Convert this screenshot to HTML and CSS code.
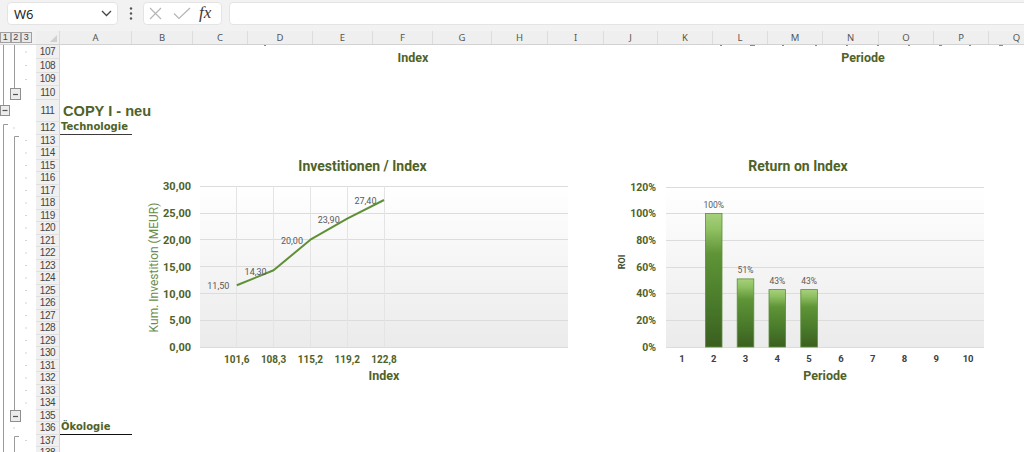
FILE: index.html
```html
<!DOCTYPE html>
<html lang="de">
<head>
<meta charset="utf-8">
<title>Sheet</title>
<link rel="stylesheet" href="styles.css">
</head>
<body>
<div class="app">
  <div class="fbar">
    <div class="namebox">
      <span class="ref">W6</span>
      <svg class="chev" width="11" height="7" viewBox="0 0 11 7"><path d="M1 1 L5.5 5.5 L10 1" fill="none" stroke="#444" stroke-width="1.3"/></svg>
    </div>
    <div class="kebab">
      <svg width="4" height="13" viewBox="0 0 4 13"><circle cx="2" cy="1.5" r="1.2" fill="#555"/><circle cx="2" cy="6.5" r="1.2" fill="#555"/><circle cx="2" cy="11.5" r="1.2" fill="#555"/></svg>
    </div>
    <div class="fxbox">
      <svg class="ico-x" width="13" height="13" viewBox="0 0 13 13"><path d="M1 1 L12 12 M12 1 L1 12" stroke="#b5b5b5" stroke-width="1.2" fill="none"/></svg>
      <svg class="ico-ok" width="18" height="13" viewBox="0 0 18 13"><path d="M1 6.5 L6 11.5 L17 1" stroke="#b5b5b5" stroke-width="1.2" fill="none"/></svg>
      <span class="fx">fx</span>
    </div>
    <div class="formula"></div>
  </div>

  <div class="colhdr">
    <div class="levels"><span class="lvl">1</span><span class="lvl">2</span><span class="lvl">3</span></div>
    <div class="corner"><svg width="7" height="7" viewBox="0 0 7 7"><path d="M7 0 L7 7 L0 7 Z" fill="#d0d0d0"/></svg></div>
    <div class="ch w72">A</div>
    <div class="ch w61">B</div>
    <div class="ch w55">C</div>
    <div class="ch w65">D</div>
    <div class="ch w60">E</div>
    <div class="ch w60">F</div>
    <div class="ch w59">G</div>
    <div class="ch w56">H</div>
    <div class="ch w56">I</div>
    <div class="ch w54">J</div>
    <div class="ch w55">K</div>
    <div class="ch w55">L</div>
    <div class="ch w55">M</div>
    <div class="ch w56">N</div>
    <div class="ch w55">O</div>
    <div class="ch w55">P</div>
    <div class="ch w56">Q</div>
  </div>

  <div class="sheet">
    <svg class="outline" width="36" height="407" viewBox="0 0 36 407">
      <g stroke="#9a9a9a" stroke-width="1" fill="none">
        <path d="M3.5 0 V60"/>
        <path d="M14.5 0 V43"/>
        <path d="M8 79.5 H3.5 V407"/>
        <path d="M19 91.5 H14.5 V365"/>
        <path d="M19 391.5 H14.5 V407"/>
      </g>
      <g class="obtn">
        <rect x="10.5" y="43.5" width="10" height="11"/>
        <path d="M13 49.5 H18"/>
        <rect x="0.5" y="60.5" width="9" height="10"/>
        <path d="M2.5 65.5 H7.5"/>
        <rect x="10.5" y="365.5" width="10" height="11"/>
        <path d="M13 371.5 H18"/>
      </g>
      <g fill="#a8a8a8">
        <rect x="25.5" y="6.5" width="1" height="1"/>
        <rect x="25.5" y="20" width="1" height="1"/>
        <rect x="25.5" y="34" width="1" height="1"/>
        <rect x="13.5" y="82.5" width="1" height="1"/>
        <rect x="25.5" y="95" width="1" height="1"/>
        <rect x="25.5" y="107.5" width="1" height="1"/>
        <rect x="25.5" y="120" width="1" height="1"/>
        <rect x="25.5" y="132.5" width="1" height="1"/>
        <rect x="25.5" y="145" width="1" height="1"/>
        <rect x="25.5" y="157.5" width="1" height="1"/>
        <rect x="25.5" y="170" width="1" height="1"/>
        <rect x="25.5" y="182.5" width="1" height="1"/>
        <rect x="25.5" y="195" width="1" height="1"/>
        <rect x="25.5" y="207.5" width="1" height="1"/>
        <rect x="25.5" y="220" width="1" height="1"/>
        <rect x="25.5" y="232.5" width="1" height="1"/>
        <rect x="25.5" y="245" width="1" height="1"/>
        <rect x="25.5" y="257.5" width="1" height="1"/>
        <rect x="25.5" y="270" width="1" height="1"/>
        <rect x="25.5" y="282.5" width="1" height="1"/>
        <rect x="25.5" y="295" width="1" height="1"/>
        <rect x="25.5" y="307.5" width="1" height="1"/>
        <rect x="25.5" y="320" width="1" height="1"/>
        <rect x="25.5" y="332.5" width="1" height="1"/>
        <rect x="25.5" y="345" width="1" height="1"/>
        <rect x="25.5" y="357.5" width="1" height="1"/>
        <rect x="13.5" y="382.5" width="1" height="1"/>
        <rect x="25.5" y="395" width="1" height="1"/>
      </g>
    </svg>

    <div class="rows">
      <div class="row rA"><div class="rh">107</div><div class="ca"></div></div>
      <div class="row rA"><div class="rh">108</div><div class="ca"></div></div>
      <div class="row rA"><div class="rh">109</div><div class="ca"></div></div>
      <div class="row rA"><div class="rh">110</div><div class="ca"></div></div>
      <div class="row rB"><div class="rh">111</div><div class="ca head"><span>COPY I - neu</span></div></div>
      <div class="row"><div class="rh">112</div><div class="ca sec"><span>Technologie</span></div></div>
      <div class="row"><div class="rh">113</div><div class="ca"></div></div>
      <div class="row"><div class="rh">114</div><div class="ca"></div></div>
      <div class="row"><div class="rh">115</div><div class="ca"></div></div>
      <div class="row"><div class="rh">116</div><div class="ca"></div></div>
      <div class="row"><div class="rh">117</div><div class="ca"></div></div>
      <div class="row"><div class="rh">118</div><div class="ca"></div></div>
      <div class="row"><div class="rh">119</div><div class="ca"></div></div>
      <div class="row"><div class="rh">120</div><div class="ca"></div></div>
      <div class="row"><div class="rh">121</div><div class="ca"></div></div>
      <div class="row"><div class="rh">122</div><div class="ca"></div></div>
      <div class="row"><div class="rh">123</div><div class="ca"></div></div>
      <div class="row"><div class="rh">124</div><div class="ca"></div></div>
      <div class="row"><div class="rh">125</div><div class="ca"></div></div>
      <div class="row"><div class="rh">126</div><div class="ca"></div></div>
      <div class="row"><div class="rh">127</div><div class="ca"></div></div>
      <div class="row"><div class="rh">128</div><div class="ca"></div></div>
      <div class="row"><div class="rh">129</div><div class="ca"></div></div>
      <div class="row"><div class="rh">130</div><div class="ca"></div></div>
      <div class="row"><div class="rh">131</div><div class="ca"></div></div>
      <div class="row"><div class="rh">132</div><div class="ca"></div></div>
      <div class="row"><div class="rh">133</div><div class="ca"></div></div>
      <div class="row"><div class="rh">134</div><div class="ca"></div></div>
      <div class="row"><div class="rh">135</div><div class="ca"></div></div>
      <div class="row"><div class="rh">136</div><div class="ca sec sec-dark"><span>Ökologie</span></div></div>
      <div class="row"><div class="rh">137</div><div class="ca"></div></div>
      <div class="row"><div class="rh">138</div><div class="ca"></div></div>
    </div>
  </div>

  <!-- remnants of charts above (rows scrolled off) -->
  <svg class="remnant" width="1024" height="30" viewBox="0 40 1024 30">
    <g fill="#8a8a8a">
      <rect x="264" y="45" width="2" height="1"/>
      <rect x="720" y="45" width="2" height="1"/>
      <rect x="750" y="45" width="5" height="1"/>
      <rect x="782" y="45" width="2" height="1"/>
      <rect x="815" y="45" width="2" height="1"/>
      <rect x="846" y="45" width="2" height="1"/>
      <rect x="877" y="45" width="2" height="1"/>
      <rect x="908" y="45" width="2" height="1"/>
      <rect x="939" y="45" width="3" height="1"/>
      <rect x="969" y="45" width="2" height="1"/>
      <rect x="999" y="45" width="4" height="1"/>
    </g>
    <text class="c-axt" x="413" y="61.5" text-anchor="middle">Index</text>
    <text class="c-axt" x="863" y="61.5" text-anchor="middle">Periode</text>
  </svg>

  <!-- Chart 1 -->
  <svg class="chart chart1" width="450" height="250" viewBox="130 145 450 250">
    <defs>
      <linearGradient id="pg1" x1="0" y1="0" x2="0" y2="1">
        <stop offset="0" stop-color="#ffffff"/>
        <stop offset="0.35" stop-color="#f8f8f8"/>
        <stop offset="1" stop-color="#ebebeb"/>
      </linearGradient>
    </defs>
    <rect x="200" y="186" width="368" height="161" fill="url(#pg1)"/>
    <g stroke="#dcdcdc" stroke-width="1">
      <line x1="200" x2="568" y1="186.5" y2="186.5"/>
      <line x1="200" x2="568" y1="213.5" y2="213.5"/>
      <line x1="200" x2="568" y1="239.5" y2="239.5"/>
      <line x1="200" x2="568" y1="266.5" y2="266.5"/>
      <line x1="200" x2="568" y1="293.5" y2="293.5"/>
      <line x1="200" x2="568" y1="320.5" y2="320.5"/>
      <line x1="200" x2="568" y1="347.5" y2="347.5"/>
    </g>
    <g stroke="#e4e4e4" stroke-width="1">
      <line x1="236.5" x2="236.5" y1="186" y2="347"/>
      <line x1="273.5" x2="273.5" y1="186" y2="347"/>
      <line x1="310.5" x2="310.5" y1="186" y2="347"/>
      <line x1="347.5" x2="347.5" y1="186" y2="347"/>
      <line x1="384.5" x2="384.5" y1="186" y2="347"/>
    </g>
    <text class="c-title" x="362.5" y="170.5" text-anchor="middle">Investitionen / Index</text>
    <g class="c-ylab" text-anchor="end">
      <text x="191" y="190">30,00</text>
      <text x="191" y="217">25,00</text>
      <text x="191" y="243.5">20,00</text>
      <text x="191" y="270.5">15,00</text>
      <text x="191" y="297.5">10,00</text>
      <text x="191" y="324">5,00</text>
      <text x="191" y="351">0,00</text>
    </g>
    <text class="c-ytitle" x="158" y="267.5" text-anchor="middle" transform="rotate(-90 158 267.5)">Kum. Investition (MEUR)</text>
    <g class="c-xlab" text-anchor="middle">
      <text x="236.8" y="362.8">101,6</text>
      <text x="273.6" y="362.8">108,3</text>
      <text x="310.4" y="362.8">115,2</text>
      <text x="347.2" y="362.8">119,2</text>
      <text x="384" y="362.8">122,8</text>
    </g>
    <text class="c-axt" x="384" y="379.5" text-anchor="middle">Index</text>
    <polyline points="236.8,285.3 273.6,270.3 310.4,239.7 347.2,218.7 384,200" fill="none" stroke="#5f8f36" stroke-width="2" stroke-linejoin="round"/>
    <g class="c-dlab" text-anchor="middle">
      <text x="218.3" y="289.3">11,50</text>
      <text x="255.6" y="274.5">14,30</text>
      <text x="292" y="243.7">20,00</text>
      <text x="328.7" y="222.7">23,90</text>
      <text x="365.5" y="203.7">27,40</text>
    </g>
  </svg>

  <!-- Chart 2 -->
  <svg class="chart chart2" width="410" height="250" viewBox="590 145 410 250">
    <defs>
      <linearGradient id="pg2" x1="0" y1="0" x2="0" y2="1">
        <stop offset="0" stop-color="#ffffff"/>
        <stop offset="0.35" stop-color="#f8f8f8"/>
        <stop offset="1" stop-color="#ebebeb"/>
      </linearGradient>
      <linearGradient id="bar" x1="0" y1="0" x2="0" y2="1">
        <stop offset="0" stop-color="#a7d17c"/>
        <stop offset="0.12" stop-color="#8fc062"/>
        <stop offset="0.3" stop-color="#5f9437"/>
        <stop offset="0.65" stop-color="#4b7c2b"/>
        <stop offset="1" stop-color="#3a5f20"/>
      </linearGradient>
    </defs>
    <rect x="666" y="187" width="318" height="160" fill="url(#pg2)"/>
    <g stroke="#dcdcdc" stroke-width="1">
      <line x1="666" x2="984" y1="187.5" y2="187.5"/>
      <line x1="666" x2="984" y1="213.5" y2="213.5"/>
      <line x1="666" x2="984" y1="240.5" y2="240.5"/>
      <line x1="666" x2="984" y1="267.5" y2="267.5"/>
      <line x1="666" x2="984" y1="293.5" y2="293.5"/>
      <line x1="666" x2="984" y1="320.5" y2="320.5"/>
      <line x1="666" x2="984" y1="347.5" y2="347.5"/>
    </g>
    <text class="c-title" x="798" y="170.5" text-anchor="middle">Return on Index</text>
    <g class="c-ylab c-ylab2" text-anchor="end">
      <text x="656" y="191">120%</text>
      <text x="656" y="217.3">100%</text>
      <text x="656" y="244">80%</text>
      <text x="656" y="270.7">60%</text>
      <text x="656" y="297.4">40%</text>
      <text x="656" y="324">20%</text>
      <text x="656" y="350.8">0%</text>
    </g>
    <text class="c-roi" x="625" y="262" text-anchor="middle" transform="rotate(-90 625 262)">ROI</text>
    <g class="c-xlab2" text-anchor="middle">
      <text x="681.9" y="361.5">1</text>
      <text x="713.7" y="361.5">2</text>
      <text x="745.5" y="361.5">3</text>
      <text x="777.3" y="361.5">4</text>
      <text x="809.1" y="361.5">5</text>
      <text x="840.9" y="361.5">6</text>
      <text x="872.7" y="361.5">7</text>
      <text x="904.5" y="361.5">8</text>
      <text x="936.3" y="361.5">9</text>
      <text x="968.1" y="361.5">10</text>
    </g>
    <text class="c-axt" x="825" y="379.5" text-anchor="middle">Periode</text>
    <g fill="url(#bar)" stroke="#5c8f37" stroke-width="0.8">
      <rect x="705.4" y="213.5" width="16.6" height="133.5"/>
      <rect x="737.2" y="278.9" width="16.6" height="68.1"/>
      <rect x="769" y="289.6" width="16.6" height="57.4"/>
      <rect x="800.8" y="289.6" width="16.6" height="57.4"/>
    </g>
    <g class="c-dlab c-dlab2" text-anchor="middle">
      <text x="713.7" y="207.8">100%</text>
      <text x="745.5" y="273.2">51%</text>
      <text x="777.3" y="283.9">43%</text>
      <text x="809.1" y="283.9">43%</text>
    </g>
  </svg>
</div>
</body>
</html>
```

FILE: styles.css
```css
* { box-sizing: border-box; }
html, body { margin: 0; padding: 0; }
body {
  width: 1024px;
  height: 452px;
  overflow: hidden;
  background: #ffffff;
  font-family: "Liberation Sans", Arial, sans-serif;
}
.app {
  position: relative;
  width: 1024px;
  height: 452px;
  overflow: hidden;
  background: #ffffff;
}

/* formula bar */
.fbar {
  height: 31px;
  background: #f2f2f2;
  display: flex;
  align-items: flex-start;
  padding: 2px 0 0 7px;
}
.namebox {
  width: 111px;
  height: 23px;
  background: #ffffff;
  border: 1px solid #e4e4e4;
  border-radius: 4px;
  display: flex;
  align-items: center;
  justify-content: space-between;
  padding: 0 5px 0 6px;
}
.ref {
  font-family: "Noto Sans", "Open Sans", sans-serif;
  font-size: 13px;
  color: #262626;
}
.kebab {
  width: 25px;
  height: 23px;
  display: flex;
  align-items: center;
  justify-content: center;
}
.fxbox {
  width: 79px;
  height: 23px;
  background: #ffffff;
  border: 1px solid #e4e4e4;
  border-radius: 4px;
  display: flex;
  align-items: center;
  padding-left: 5px;
  gap: 0;
}
.ico-x { margin-right: 11px; }
.ico-ok { margin-right: 8px; }
.fx {
  font-family: "Liberation Serif", "Times New Roman", serif;
  font-style: italic;
  font-size: 17px;
  color: #3a3a3a;
  line-height: 1;
  margin-top: -2px;
}
.formula {
  flex: 1;
  height: 23px;
  margin-left: 7px;
  margin-right: -6px;
  background: #ffffff;
  border: 1px solid #e4e4e4;
  border-radius: 4px;
}

/* column header */
.colhdr {
  height: 14px;
  display: flex;
  background: #efefef;
  border-bottom: 1px solid #d2d2d2;
  font-family: "Noto Sans", "Liberation Sans", sans-serif;
  font-size: 9.5px;
  color: #555555;
  white-space: nowrap;
}
.levels {
  width: 36px;
  flex: none;
  display: flex;
  align-items: center;
  background: #f2f2f2;
}
.lvl {
  width: 10.5px;
  height: 11px;
  border: 1px solid #a0a0a0;
  background: #e9e9e9;
  font-family: "Liberation Sans", sans-serif;
  font-size: 9px;
  line-height: 9px;
  color: #444;
  text-align: center;
}
.corner {
  width: 24px;
  flex: none;
  display: flex;
  align-items: flex-end;
  justify-content: flex-end;
  padding: 0 2px 2px 0;
  border-right: 1px solid #dadada;
}
.ch {
  flex: none;
  text-align: center;
  line-height: 13px;
  border-right: 1px solid #dcdcdc;
}
.w72 { width: 72px; }
.w65 { width: 65px; }
.w61 { width: 61px; }
.w60 { width: 60px; }
.w59 { width: 59px; }
.w56 { width: 56px; }
.w55 { width: 55px; }
.w54 { width: 54px; }

/* sheet body */
.sheet {
  display: flex;
  height: 407px;
}
.outline {
  flex: none;
  display: block;
  background: #ffffff;
}
.obtn rect { fill: #ececec; stroke: #8f8f8f; stroke-width: 1; }
.obtn path { stroke: #555555; stroke-width: 1.2; fill: none; }

.rows {
  flex: 1;
  display: flex;
  flex-direction: column;
}
.row {
  display: grid;
  grid-template-columns: 24px 72px 1fr;
  height: 12.5px;
  flex: none;
}
.row.rA { height: 13.75px; }
.row.rB { height: 22px; }
.rh {
  background: #f0f0f0;
  border-bottom: 1px solid #e0e0e0;
  border-right: 1px solid #d6d6d6;
  font-family: "Liberation Sans", Arial, sans-serif;
  font-size: 10px;
  color: #444444;
  display: flex;
  align-items: center;
  justify-content: center;
  letter-spacing: -0.4px;
}
.ca {
  white-space: nowrap;
  overflow: visible;
  padding-left: 3px;
}
.head {
  display: flex;
  align-items: flex-end;
  padding-bottom: 3px;
}
.head span {
  font-family: "Liberation Sans", Arial, sans-serif;
  font-weight: 700;
  font-size: 14.6px;
  line-height: 15px;
  color: #4f6228;
}
.sec {
  border-bottom: 1px solid #3b3b3b;
  padding-left: 1px;
}
.sec span {
  display: block;
  font-family: "DejaVu Sans", Verdana, sans-serif;
  font-weight: 700;
  font-size: 10px;
  line-height: 10px;
  color: #4f6228;
}
.sec-dark { border-bottom-color: #111111; }

/* charts */
.chart, .remnant {
  position: absolute;
  display: block;
}
.remnant { left: 0; top: 40px; }
.chart1 { left: 130px; top: 145px; }
.chart2 { left: 590px; top: 145px; }

.c-title {
  font-family: Roboto, "Liberation Sans", sans-serif;
  font-weight: 700;
  font-size: 14px;
  fill: #4f6228;
}
.c-ylab {
  font-family: Roboto, "Liberation Sans", sans-serif;
  font-weight: 700;
  font-size: 11px;
  fill: #4f6228;
}
.c-ylab2 { font-size: 10.5px; }
.c-xlab {
  font-family: Roboto, "Liberation Sans", sans-serif;
  font-weight: 700;
  font-size: 10px;
  fill: #4f6228;
}
.c-xlab2 {
  font-family: Roboto, "Liberation Sans", sans-serif;
  font-weight: 700;
  font-size: 9.5px;
  fill: #404040;
}
.c-axt {
  font-family: Roboto, "Liberation Sans", sans-serif;
  font-weight: 700;
  font-size: 12.5px;
  fill: #4f6228;
}
.c-ytitle {
  font-family: Roboto, "Liberation Sans", sans-serif;
  font-size: 12px;
  fill: #6a8d4a;
}
.c-roi {
  font-family: Roboto, "Liberation Sans", sans-serif;
  font-weight: 700;
  font-size: 9px;
  fill: #3f4d2e;
}
.c-dlab {
  font-family: Roboto, "Liberation Sans", sans-serif;
  font-size: 9px;
  fill: #595959;
}
.c-dlab2 { font-size: 8.5px; }
```
